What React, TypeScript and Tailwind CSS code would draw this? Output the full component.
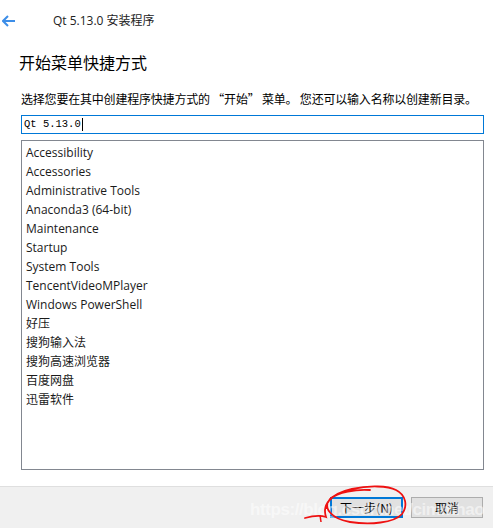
import React from 'react'

const ITEMS = [
  'Accessibility',
  'Accessories',
  'Administrative Tools',
  'Anaconda3 (64-bit)',
  'Maintenance',
  'Startup',
  'System Tools',
  'TencentVideoMPlayer',
  'Windows PowerShell',
  '好压',
  '搜狗输入法',
  '搜狗高速浏览器',
  '百度网盘',
  '迅雷软件',
]

const ui = { fontFamily: '"Open Sans", "Noto Sans", "Noto Sans CJK SC", sans-serif' }
const cjk = { fontFamily: '"Noto Sans CJK SC", "Noto Sans", sans-serif' }

export default function App() {
  return (
    <div className="relative flex h-[528px] w-[493px] flex-col overflow-hidden bg-white text-[#000]" style={ui}>
      {/* title bar */}
      <div className="flex h-[42px] items-center">
        <svg width="14" height="12" viewBox="0 0 14 12" className="ml-[2px]">
          <path d="M6 1 L1 6 L6 11 M1 6 H13" fill="none" stroke="#3d8ee8" strokeWidth="2" />
        </svg>
        <span className="ml-[37px] text-[12px] text-[#222]">Qt 5.13.0 安装程序</span>
      </div>

      {/* heading */}
      <div className="ml-[19px] mt-[9px] text-[16px] leading-[22px]" style={cjk}>开始菜单快捷方式</div>

      <div className="ml-[21px] mt-[18px] text-[12px] leading-[16px] tracking-[-0.2px]" style={cjk}>
        选择您要在其中创建程序快捷方式的 “开始” 菜单。 您还可以输入名称以创建新目录。
      </div>

      {/* input */}
      <div className="ml-[21px] mt-[8px] flex h-[19px] w-[463px] items-center border border-[#0078d7] pl-[2px]">
        <span className="text-[10.5px] leading-none" style={{ fontFamily: '"Liberation Mono", "DejaVu Sans Mono", monospace' }}>Qt 5.13.0</span>
        <span className="ml-[1px] h-[13px] w-px bg-black" />
      </div>

      {/* list */}
      <div className="ml-[21px] mt-[6px] h-[330px] w-[463px] border border-[#828790] pl-[4px] pt-[2px]">
        {ITEMS.map(it => (
          <div key={it} className="h-[19px] text-[12px] leading-[19px] text-[#1a1a1a]">{it}</div>
        ))}
      </div>

      {/* footer */}
      <div className="mt-auto flex h-[42px] items-center justify-end gap-[8px] border-t border-[#dfdfdf] bg-[#f0f0f0] pr-[10px]">
        <div className="flex h-[21px] w-[73px] items-center justify-center border-2 border-[#0078d7] bg-[#e1e1e1] text-[12px]" style={cjk}>
          下一步(N)
        </div>
        <div className="flex h-[21px] w-[72px] items-center justify-center border border-[#adadad] bg-[#e1e1e1] text-[12px]" style={cjk}>
          取消
        </div>
      </div>

      {/* watermark */}
      <div className="pointer-events-none absolute left-[250px] top-[497px] text-[17px] font-bold tracking-tight text-white/50" style={{ fontFamily: '"Liberation Sans", sans-serif' }}>
        https://blog.csdn.net/cimmhao
      </div>

      {/* red annotation */}
      <svg className="pointer-events-none absolute left-0 top-0" width="493" height="528" viewBox="0 0 493 528">
        <path
          d="M305 518 C 312 516, 320 515, 326 517 C 322 505, 330 494, 352 489 C 370 485, 388 486, 396 490 C 406 495, 408 506, 402 514 C 394 523, 370 525, 350 522 C 332 519, 322 508, 330 499 C 338 492, 356 489, 370 490"
          fill="none"
          stroke="#ee1111"
          strokeWidth="1.8"
          strokeLinecap="round"
        />
        <path d="M320 515 L 321 522" fill="none" stroke="#ee1111" strokeWidth="1.5" />
      </svg>
    </div>
  )
}
